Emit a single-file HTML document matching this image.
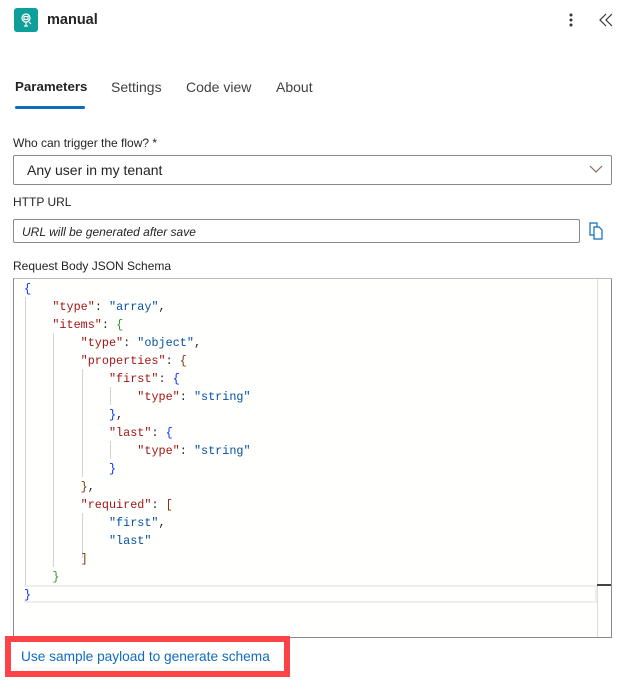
<!DOCTYPE html>
<html><head><meta charset="utf-8"><style>
*{box-sizing:border-box;margin:0;padding:0}
body{width:619px;height:684px;background:#fff;font-family:"Liberation Sans",sans-serif;color:#242424;position:relative;overflow:hidden}
.a{position:absolute}
.code{font-family:"Liberation Mono",monospace;font-size:11.8px;white-space:pre;line-height:18px}
.k{color:#a31515}.s{color:#0451a5}.p{color:#333}
.g{position:absolute;width:1px;background:#d3d3d3}
</style></head><body>
<div class="a" style="left:14px;top:8px;width:24px;height:24px;background:#0e9f9a;border-radius:3px"></div>
<svg class="a" style="left:14px;top:8px" width="24" height="24" viewBox="0 0 24 24" fill="none" stroke="#fff" stroke-width="1.2"><circle cx="12" cy="10" r="4"/><rect x="10" y="8.5" width="4" height="3"/><path d="M12 14v4M10 18h4M15 14l2 2"/></svg>
<div class="a" style="left:47px;top:12px;font-size:14.5px;font-weight:bold">manual</div>
<svg class="a" style="left:566px;top:12px" width="10" height="16"><circle cx="5" cy="3" r="1.5" fill="#333"/><circle cx="5" cy="8" r="1.5" fill="#333"/><circle cx="5" cy="13" r="1.5" fill="#333"/></svg>
<svg class="a" style="left:599px;top:13px" width="14" height="14" fill="none" stroke="#333" stroke-width="1.2"><path d="M7 1L1 7l6 6M13 1L7 7l6 6"/></svg>
<div class="a" style="left:15px;top:79px;font-size:13.3px;font-weight:bold">Parameters</div>
<div class="a" style="left:15px;top:106px;width:70px;height:3px;background:#0f6cbd;border-radius:2px"></div>
<div class="a" style="left:111px;top:79px;font-size:14px;color:#424242">Settings</div>
<div class="a" style="left:186px;top:79px;font-size:14px;color:#424242">Code view</div>
<div class="a" style="left:276px;top:79px;font-size:14px;color:#424242">About</div>
<div class="a" style="left:13px;top:136px;font-size:12px">Who can trigger the flow? *</div>
<div class="a" style="left:13px;top:155px;width:599px;height:30px;border:1px solid #8a8a8a;border-radius:2px"></div>
<div class="a" style="left:27px;top:162px;font-size:14px">Any user in my tenant</div>
<svg class="a" style="left:589px;top:165px" width="14" height="9" fill="none" stroke="#8a6d5a" stroke-width="1.2"><path d="M1 1l6 6 6-6"/></svg>
<div class="a" style="left:13px;top:195px;font-size:12px">HTTP URL</div>
<div class="a" style="left:13px;top:219px;width:567px;height:24px;border:1px solid #8a8a8a;border-radius:2px"></div>
<div class="a" style="left:22px;top:225px;font-size:12px;font-style:italic">URL will be generated after save</div>
<svg class="a" style="left:589px;top:222px" width="16" height="18" fill="#fff" stroke="#0f6cbd" stroke-width="1.2"><path d="M1 1h7l0 0v12H1z"/><path d="M5 5h5l3 3v9H5z"/></svg>
<div class="a" style="left:13px;top:259px;font-size:12px">Request Body JSON Schema</div>
<div class="a" style="left:13px;top:278px;width:599px;height:360px;border:1px solid #8a8a8a;border-top:1px solid #bbb;background:#fffffd"></div>
<div class="a" style="left:597px;top:279px;width:1px;height:358px;background:#ddd"></div>
<div class="a" style="left:597px;top:584px;width:14px;height:2px;background:#444"></div>
<div class="a" style="left:24px;top:585px;width:573px;height:18px;border:2px solid #eee;border-left:none"></div>
<div class="g" style="left:25px;top:297px;height:288px"></div>
<div class="g" style="left:53px;top:333px;height:234px"></div>
<div class="g" style="left:82px;top:369px;height:108px"></div>
<div class="g" style="left:82px;top:513px;height:45px"></div>
<div class="g" style="left:110px;top:387px;height:18px"></div>
<div class="g" style="left:110px;top:441px;height:18px"></div>
<div class="a code" style="left:24px;top:280px"><span class="s" style="color:#0431fa">{</span>
    <span class="k">"type"</span>: <span class="s">"array"</span>,
    <span class="k">"items"</span>: <span style="color:#319331">{</span>
        <span class="k">"type"</span>: <span class="s">"object"</span>,
        <span class="k">"properties"</span>: <span style="color:#7b3814">{</span>
            <span class="k">"first"</span>: <span style="color:#0431fa">{</span>
                <span class="k">"type"</span>: <span class="s">"string"</span>
            <span style="color:#0431fa">}</span>,
            <span class="k">"last"</span>: <span style="color:#0431fa">{</span>
                <span class="k">"type"</span>: <span class="s">"string"</span>
            <span style="color:#0431fa">}</span>
        <span style="color:#7b3814">}</span>,
        <span class="k">"required"</span>: <span style="color:#7b3814">[</span>
            <span class="s">"first"</span>,
            <span class="s">"last"</span>
        <span style="color:#7b3814">]</span>
    <span style="color:#319331">}</span>
<span style="color:#0431fa">}</span></div>
<div class="a" style="left:5px;top:636px;width:285px;height:41px;border:6px solid #fd4345;background:#fff"></div>
<div class="a" style="left:21px;top:649px;font-size:13.7px;color:#0f6cbd">Use sample payload to generate schema</div>
</body></html>
